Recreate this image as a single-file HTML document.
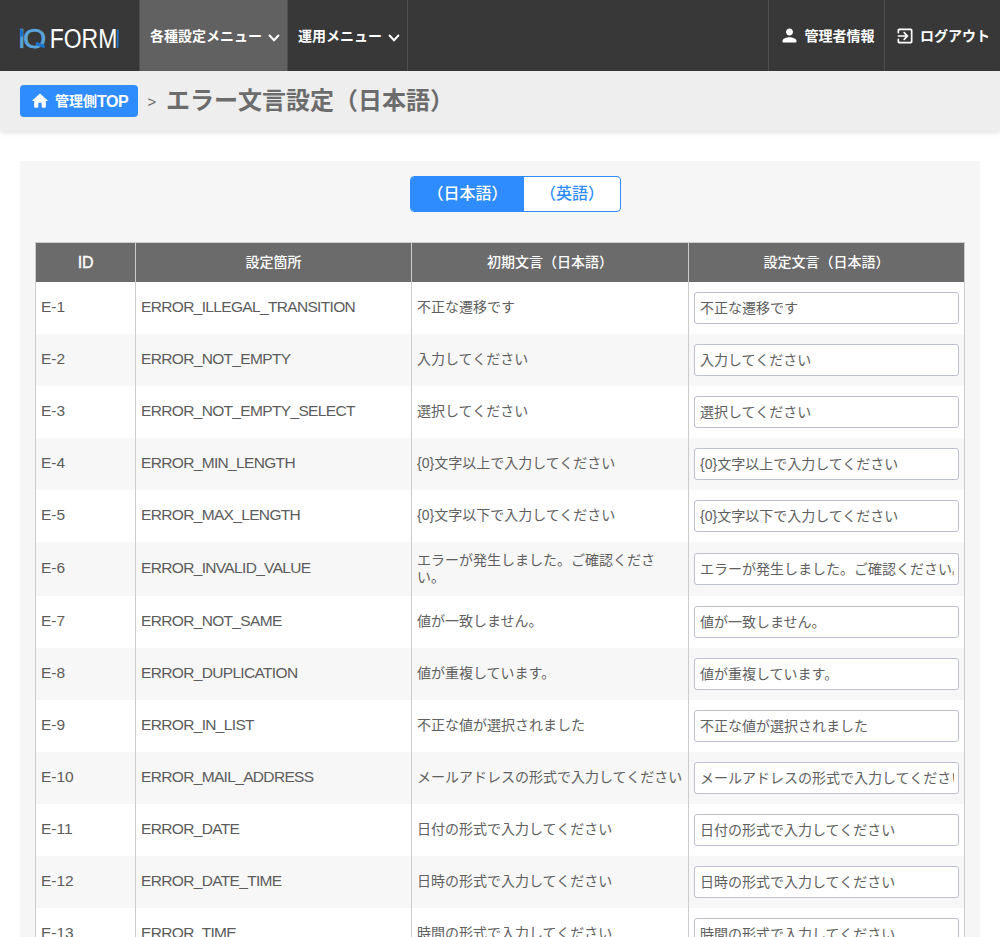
<!DOCTYPE html>
<html lang="ja">
<head>
<meta charset="utf-8">
<title>エラー文言設定（日本語）</title>
<style>
*{box-sizing:border-box;margin:0;padding:0}
html{background:#fff;overflow:hidden;height:937px}
body{width:1000px;height:937px;background:#fff;position:relative}
body{font-family:"Liberation Sans","Noto Sans CJK JP",sans-serif;color:#555;font-size:15px;line-height:1.2}
.hdr{position:relative;height:71px;background:#383838;color:#fff;font-weight:bold;font-size:14px}
.hdr .logo{font-weight:normal;position:absolute;left:19px;top:25px;width:104px;height:30px}
.hdr .mi{position:absolute;top:0;height:71px;line-height:73px;white-space:nowrap;border-right:1px solid #4e4e4e}
.hdr .mi.act{background:#616161}
.hdr .mi .chev{margin-left:6px;position:relative;top:.9px;left:-.5px}
.hdr .mi .ic{position:absolute;top:25px}
.bc .btn .top{font-size:16px;letter-spacing:-.5px;line-height:1;position:relative;top:1.300px}
.bc{position:relative;height:60px;background:#eee;box-shadow:0 2px 5px rgba(0,0,0,.11)}
.bc .btn{position:absolute;left:20px;top:14px;width:118px;height:32px;background:#2f8cff;border-radius:4px;color:#fff;font-weight:bold;font-size:14px;line-height:32px;white-space:nowrap}
.bc .gt{position:absolute;left:147.500px;top:22px;font-size:15px;color:#666}
.bc h1{position:absolute;left:166px;top:14px;font-size:24px;font-weight:bold;color:#6c6c6c;line-height:32px;white-space:nowrap;letter-spacing:0}
.panel{position:absolute;left:20px;top:161px;width:960px;height:776px;background:#f6f6f6;overflow:hidden}
.tog{position:absolute;left:390px;top:15px;width:211px;height:36px;border:1px solid #2f8cff;border-radius:4px;background:#fff;overflow:hidden;font-size:16px;font-weight:500;line-height:34px}
.tog span{position:absolute;top:0;height:34px;text-align:center}
.tog .a{left:0;width:113px;background:#2f8cff;color:#fff}
.tog .b{left:113px;width:96px;color:#2f8cff}
table{position:absolute;left:15px;top:81px;width:929px;border-collapse:collapse;table-layout:fixed}
th{height:39px;padding:0;background:#6b6b6b;color:#fff;font-size:14px;font-weight:500;border-left:1px solid #ccc;border-right:1px solid #ccc;border-top:1px solid #ccc;text-align:center}
td{height:52px;border-left:1px solid #ccc;border-right:1px solid #ccc;padding:10px 5px;vertical-align:middle;background:#fff;font-size:15.500px;color:#5c5c5c;letter-spacing:-.66px}
td:first-child{letter-spacing:0}
tr:nth-child(even) td{background:#f7f7f7}
th .lat{font-size:16px;font-weight:normal;-webkit-text-stroke:.35px #fff;letter-spacing:-.3px}
td.j{font-size:14px;line-height:17px;letter-spacing:0;color:#606060}
td .in{letter-spacing:0}
.in{display:block;width:265px;height:32px;border:1px solid #bcc0cf;border-radius:3px;background:#fff;font-size:14px;line-height:30px;padding:0 4px 0 5px;white-space:nowrap;overflow:hidden;overflow:clip;overflow-clip-margin:content-box;color:#606060}
</style>
</head>
<body>
<div class="hdr">
  <svg class="logo" viewBox="0 0 104 30" width="104" height="30">
    <defs><clipPath id="cq"><rect x="0" y="0" width="30" height="23.4"/></clipPath></defs>
    <g clip-path="url(#cq)" font-family="Liberation Sans, sans-serif" font-size="27" fill="#5aa5dc" stroke="#5aa5dc" stroke-width=".55"><text x="-1.100" y="23">I</text><text transform="translate(3.900 23) scale(1.110 1)">Q</text></g>
    <rect x="1" y="4.200" width="3" height="7.600" rx="1.400" fill="#1b74c9"/>
    <line x1="18.300" y1="18.700" x2="24.300" y2="21.300" stroke="#1b74c9" stroke-width="3.300" stroke-linecap="round"/>
    <text x="30.700" y="23" font-family="Liberation Sans, sans-serif" font-size="27" fill="#fff" textLength="67.600" lengthAdjust="spacingAndGlyphs">FORM</text>
    <rect x="97.700" y="4.400" width="1.900" height="18.600" rx=".9" fill="#1b74c9"/>
  </svg>
  <div class="mi act" style="left:139px;width:149px;padding-left:10px;border-left:1px solid #4e4e4e">各種設定メニュー<svg class="chev" width="12" height="8" viewBox="0 0 12 8"><path d="M1.600 1.500 6 6.200l4.400-4.700" fill="none" stroke="#fff" stroke-width="2" stroke-linecap="round" stroke-linejoin="miter"/></svg></div>
  <div class="mi" style="left:288px;width:120px;padding-left:10px">運用メニュー<svg class="chev" width="12" height="8" viewBox="0 0 12 8"><path d="M1.600 1.500 6 6.200l4.400-4.700" fill="none" stroke="#fff" stroke-width="2" stroke-linecap="round" stroke-linejoin="miter"/></svg></div>
  <div class="mi" style="left:768px;width:117px;padding-left:35.500px;border-left:1px solid #4e4e4e"><svg class="ic" style="left:10px;top:25px" width="21" height="21" viewBox="0 0 24 24"><path fill="#fff" d="M12 12c2.210 0 4-1.790 4-4s-1.790-4-4-4-4 1.790-4 4 1.790 4 4 4zm0 2c-2.670 0-8 1.340-8 4v1c0 .55.450 1 1 1h14c.55 0 1-.45 1-1v-1c0-2.660-5.330-4-8-4z"/></svg>管理者情報</div>
  <div class="mi" style="left:885px;width:115px;padding-left:35px;border-right:0"><svg class="ic" style="left:10px;top:26px" width="20" height="20" viewBox="0 0 24 24"><path fill="#fff" d="M10.300 15.300c-.390.390-.390 1.010 0 1.400.390.390 1.010.390 1.400 0l4-4c.390-.390.390-1.020 0-1.410l-4-4c-.390-.390-1.010-.390-1.400 0-.390.390-.390 1.010 0 1.400L12.590 11H4c-.55 0-1 .45-1 1s.45 1 1 1h8.590l-2.290 2.300zM19 3H5c-1.110 0-2 .9-2 2v3c0 .55.450 1 1 1s1-.45 1-1V6c0-.55.450-1 1-1h12c.55 0 1 .45 1 1v12c0 .55-.45 1-1 1H6c-.55 0-1-.45-1-1v-2c0-.55-.45-1-1-1s-1 .45-1 1v3c0 1.100.9 2 2 2h14c1.100 0 2-.9 2-2V5c0-1.100-.9-2-2-2z"/></svg>ログアウト</div>
</div>
<div class="bc">
  <div class="btn"><svg style="position:absolute;left:10px;top:6px" width="20" height="20" viewBox="0 0 24 24"><path fill="#fff" d="M10 19v-5h4v5c0 .55.450 1 1 1h3c.55 0 1-.45 1-1v-7h1.700c.460 0 .680-.57.330-.87L12.670 3.600c-.380-.340-.960-.340-1.340 0l-8.360 7.530c-.340.300-.130.870.330.870H5v7c0 .55.450 1 1 1h3c.55 0 1-.45 1-1z"/></svg><span style="margin-left:35px">管理側<span class="top">TOP</span></span></div>
  <div class="gt">&gt;</div>
  <h1>エラー文言設定（日本語）</h1>
</div>
<div class="panel">
  <div class="tog"><span class="a">（日本語）</span><span class="b">（英語）</span></div>
  <table>
    <colgroup><col style="width:100px"><col style="width:276px"><col style="width:277px"><col style="width:276px"></colgroup>
    <thead><tr><th><span class="lat">ID</span></th><th>設定箇所</th><th>初期文言（日本語）</th><th>設定文言（日本語）</th></tr></thead>
    <tbody>
      <tr><td>E-1</td><td>ERROR_ILLEGAL_TRANSITION</td><td class="j">不正な遷移です</td><td><span class="in">不正な遷移です</span></td></tr>
      <tr><td>E-2</td><td>ERROR_NOT_EMPTY</td><td class="j">入力してください</td><td><span class="in">入力してください</span></td></tr>
      <tr><td>E-3</td><td>ERROR_NOT_EMPTY_SELECT</td><td class="j">選択してください</td><td><span class="in">選択してください</span></td></tr>
      <tr><td>E-4</td><td>ERROR_MIN_LENGTH</td><td class="j">{0}文字以上で入力してください</td><td><span class="in">{0}文字以上で入力してください</span></td></tr>
      <tr><td>E-5</td><td>ERROR_MAX_LENGTH</td><td class="j">{0}文字以下で入力してください</td><td><span class="in">{0}文字以下で入力してください</span></td></tr>
      <tr><td>E-6</td><td>ERROR_INVALID_VALUE</td><td class="j">エラーが発生しました。ご確認くださ<br>い。</td><td><span class="in">エラーが発生しました。ご確認ください。</span></td></tr>
      <tr><td>E-7</td><td>ERROR_NOT_SAME</td><td class="j">値が一致しません。</td><td><span class="in">値が一致しません。</span></td></tr>
      <tr><td>E-8</td><td>ERROR_DUPLICATION</td><td class="j">値が重複しています。</td><td><span class="in">値が重複しています。</span></td></tr>
      <tr><td>E-9</td><td>ERROR_IN_LIST</td><td class="j">不正な値が選択されました</td><td><span class="in">不正な値が選択されました</span></td></tr>
      <tr><td>E-10</td><td>ERROR_MAIL_ADDRESS</td><td class="j">メールアドレスの形式で入力してください</td><td><span class="in">メールアドレスの形式で入力してください</span></td></tr>
      <tr><td>E-11</td><td>ERROR_DATE</td><td class="j">日付の形式で入力してください</td><td><span class="in">日付の形式で入力してください</span></td></tr>
      <tr><td>E-12</td><td>ERROR_DATE_TIME</td><td class="j">日時の形式で入力してください</td><td><span class="in">日時の形式で入力してください</span></td></tr>
      <tr><td>E-13</td><td>ERROR_TIME</td><td class="j">時間の形式で入力してください</td><td><span class="in">時間の形式で入力してください</span></td></tr>
      <tr><td>E-14</td><td>ERROR_NUMBER</td><td class="j">数値で入力してください</td><td><span class="in">数値で入力してください</span></td></tr>
    </tbody>
  </table>
</div>
</body>
</html>
